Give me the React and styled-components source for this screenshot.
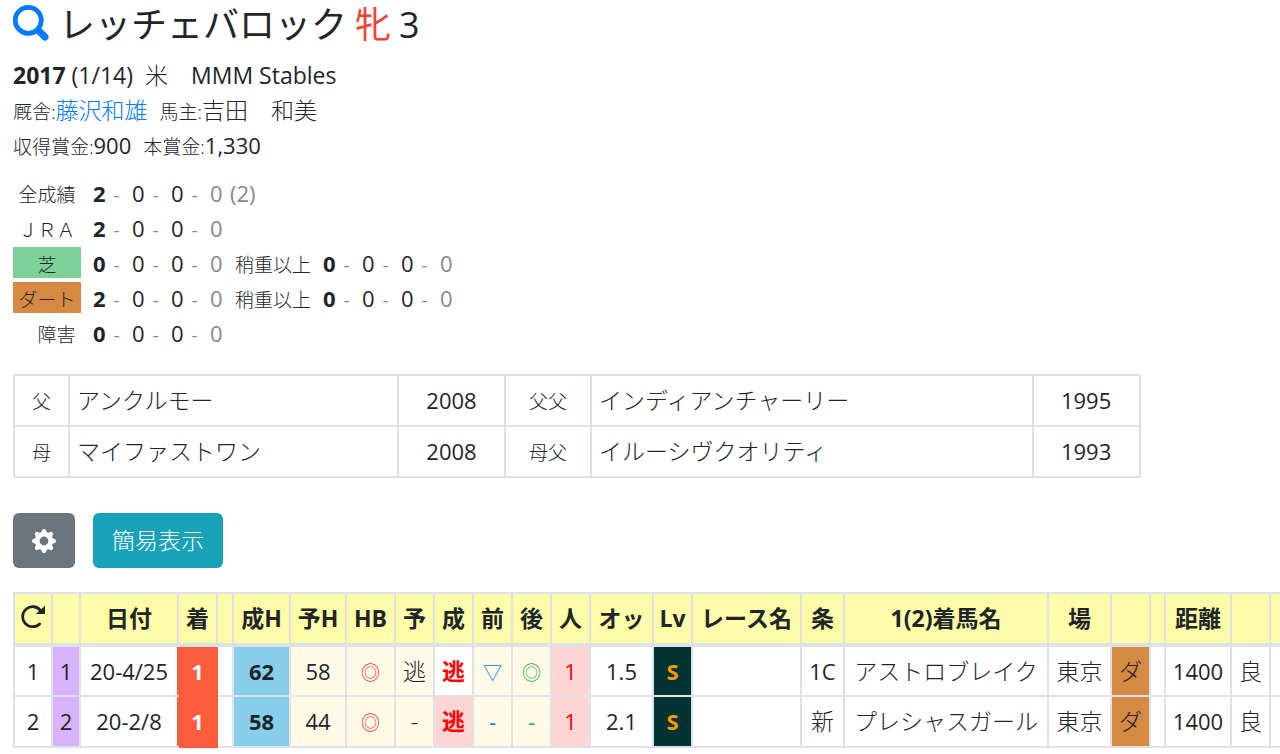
import React from 'react';
import styled, { createGlobalStyle } from 'styled-components';
import { BsGearFill } from 'react-icons/bs';

const GlobalStyle = createGlobalStyle`
  * {
    box-sizing: border-box;
  }
  body {
    margin: 0;
    overflow: hidden;
    background: #fff;
    color: #212529;
    font-family: "Open Sans", "Noto Sans CJK JP", sans-serif;
    font-size: 23px;
    font-weight: 300;
    line-height: 35px;
  }
`;

const Page = styled.main`
  padding-left: 13px;
`;

const Title = styled.h1`
  display: flex;
  align-items: center;
  gap: 8px;
  height: 50px;
  margin: 0 0 8px;
  font-size: 36px;
  font-weight: 400;
  line-height: 50px;
`;

const SearchLink = styled.a`
  display: flex;
  color: #007bff;
`;

const Sex = styled.span`
  color: #f44336;
`;

const Line = styled.div`
  display: flex;
  align-items: baseline;
  gap: 12px;
  height: 35px;
`;

const Small = styled.span`
  font-size: 19px;
`;

const Latin = styled.span`
  font-weight: 400;
`;

const Num = styled.span`
  font-size: 22px;
  font-weight: 400;
`;

const Link = styled.a`
  color: #007bff;
  text-decoration: none;
`;

const Records = styled.div`
  margin: 12px 0 24px;
`;

const Record = styled.div`
  display: flex;
  align-items: baseline;
  height: 35px;
  line-height: 37px;
`;

const RecordLabel = styled.span`
  width: 68px;
  height: 31px;
  margin-right: 12px;
  background: ${(p) => p.$bg || 'transparent'};
  font-size: 19px;
  text-align: center;
`;

const Score = styled.span`
  display: flex;
  align-items: baseline;
  font-size: 22px;
`;

const Place = styled.span`
  width: ${(p) => (p.$last ? 20 : 39)}px;
  color: ${(p) => (p.$last ? '#888' : 'inherit')};
  font-weight: ${(p) => (p.$first ? 700 : 400)};
`;

const Dash = styled.span`
  margin-left: 8px;
  color: #888;
  font-size: 19px;
  font-weight: 400;
`;

const Total = styled(Num)`
  color: #888;
`;

const Heavy = styled.span`
  margin: 0 12px 0 5px;
  font-size: 19px;
`;

const Table = styled.table`
  width: ${(p) => p.$width};
  border-collapse: collapse;
  table-layout: fixed;
`;

const Cell = styled.td`
  height: 51px;
  padding: 7px ${(p) => (p.$left ? 7 : 0)}px 2px;
  border: 2px solid #dee2e6;
  background: ${(p) => p.$bg || 'transparent'};
  color: ${(p) => p.$color || 'inherit'};
  font-weight: ${(p) => p.$weight || 300};
  text-align: ${(p) => (p.$left ? 'left' : 'center')};
  vertical-align: baseline;
  white-space: nowrap;
`;

const SmallCell = styled(Cell)`
  font-size: 19px;
`;

const NumCell = styled(Cell)`
  font-size: 22px;
  font-weight: ${(p) => p.$weight || 400};
`;

const MarkCell = styled(Cell)`
  font-size: ${(p) => (p.children === '-' ? 22 : 19)}px;
  font-weight: 400;
`;

// the finish colour runs over the borders, the left one belongs to the date cell
const DateCell = styled(NumCell)`
  border-right-color: #fa5c3c;
`;

const FinishCell = styled(NumCell)`
  border-color: #fa5c3c;
`;

const HeadCell = styled.th`
  height: 52px;
  padding: 0;
  border: 2px solid #dee2e6;
  border-bottom-width: 4px;
  background: #fcfca9;
  font-weight: 700;
  white-space: nowrap;

  svg {
    display: block;
    margin: 0 auto;
  }
`;

const Buttons = styled.div`
  display: flex;
  gap: 18px;
  margin: 35px 0 24px;
`;

const Button = styled.button`
  display: flex;
  align-items: center;
  height: 55px;
  padding: 0 19px;
  border: 0;
  border-radius: 6px;
  background: ${(p) => p.$bg};
  color: #fff;
  font: inherit;
`;

const Scroll = styled.div`
  overflow: hidden;
`;

const records = [
  { label: '全成績', wins: 2, total: '(2)' },
  { label: 'ＪＲＡ', wins: 2 },
  { label: '芝', wins: 0, bg: '#7dd098', heavy: true },
  { label: 'ダート', wins: 2, bg: '#d58943', heavy: true },
  { label: '　障害', wins: 0 },
];

const pedigree = [
  ['父', 'アンクルモー', '2008', '父父', 'インディアンチャーリー', '1995'],
  ['母', 'マイファストワン', '2008', '母父', 'イルーシヴクオリティ', '1993'],
];

const columns = [
  [38, 'refresh'], [28, ''], [98, '日付'], [39, '着'], [16, ''], [57, '成H'],
  [56, '予H'], [49, 'HB'], [39, '予'], [39, '成'], [39, '前'], [39, '後'],
  [39, '人'], [63, 'オッ'], [39, 'Lv'], [109, 'レース名'], [43, '条'],
  [204, '1(2)着馬名'], [63, '場'], [39, ''], [15, ''], [66, '距離'], [39, ''], [39, ''],
];

const cream = '#fffae5';
const pink = '#ffd6d3';

const races = [
  {
    no: 1, gate: 1, date: '20-4/25', time: 62, forecast: 58, plan: '逃', styleBg: '#fff',
    first: '▽', last: '◎', odds: '1.5', grade: '1C', rival: 'アストロブレイク',
  },
  {
    no: 2, gate: 2, date: '20-2/8', time: 58, forecast: 44, plan: '-', styleBg: pink,
    first: '-', last: '-', odds: '2.1', grade: '新', rival: 'プレシャスガール',
  },
];

function SearchIcon() {
  return (
    <svg width="38" height="42" viewBox="1 0 38 42" fill="none" stroke="currentColor" aria-hidden="true">
      <circle cx="16.3" cy="16.3" r="13" strokeWidth="4.8" />
      <path d="M27 27L33 33" strokeWidth="7" strokeLinecap="round" />
    </svg>
  );
}

function RefreshIcon() {
  return (
    <svg width="24" height="28" viewBox="0 0 24 28" fill="none" aria-label="更新">
      <path d="M19.6 5.6A10 10 0 1 0 18.6 18.9" stroke="currentColor" strokeWidth="2.8" strokeLinecap="round" />
      <path d="M24 .8V9H14.8z" fill="currentColor" />
    </svg>
  );
}

function Places(props) {
  return (
    <Score>
      <Place $first>{props.wins}<Dash>-</Dash></Place>
      <Place>0<Dash>-</Dash></Place>
      <Place>0<Dash>-</Dash></Place>
      <Place $last>0</Place>
    </Score>
  );
}

function Profile() {
  return (
    <>
      <Title>
        <SearchLink href="#search" aria-label="検索"><SearchIcon /></SearchLink>
        <span>レッチェバロック</span>
        <Sex>牝</Sex>
        <span>3</span>
      </Title>
      <Line>
        <Latin><b>2017</b> (1/14)</Latin>
        <span>米　<Latin>MMM Stables</Latin></span>
      </Line>
      <Line>
        <span><Small>厩舎:</Small><Link href="#trainer">藤沢和雄</Link></span>
        <span><Small>馬主:</Small>吉田　和美</span>
      </Line>
      <Line>
        <span><Small>収得賞金:</Small><Num>900</Num></span>
        <span><Small>本賞金:</Small><Num>1,330</Num></span>
      </Line>
    </>
  );
}

function Pedigree() {
  return (
    <Table $width="89%">
      <colgroup>
        <col width="55" /><col width="329" /><col width="107" />
        <col width="86" /><col /><col width="107" />
      </colgroup>
      <tbody>
        {pedigree.map((row) => (
          <tr key={row[0]}>
            <SmallCell>{row[0]}</SmallCell>
            <Cell $left>{row[1]}</Cell>
            <NumCell>{row[2]}</NumCell>
            <SmallCell>{row[3]}</SmallCell>
            <Cell $left>{row[4]}</Cell>
            <NumCell>{row[5]}</NumCell>
          </tr>
        ))}
      </tbody>
    </Table>
  );
}

function RaceRow({ race }) {
  return (
    <tr>
      <NumCell>{race.no}</NumCell>
      <NumCell $bg="#d9b3ff">{race.gate}</NumCell>
      <DateCell>{race.date}</DateCell>
      <FinishCell $bg="#fa5c3c" $color="#fff" $weight={700}>1</FinishCell>
      <Cell />
      <NumCell $bg="#87ceeb" $weight={700}>{race.time}</NumCell>
      <NumCell $bg={cream}>{race.forecast}</NumCell>
      <MarkCell $bg={cream} $color="#dc3545">◎</MarkCell>
      <Cell $bg={cream}>{race.plan}</Cell>
      <Cell $bg={race.styleBg} $color="#f00" $weight={700}>逃</Cell>
      <MarkCell $bg={cream} $color="#007bff">{race.first}</MarkCell>
      <MarkCell $bg={cream} $color="#28a745">{race.last}</MarkCell>
      <NumCell $bg={pink} $color="#f00">1</NumCell>
      <NumCell>{race.odds}</NumCell>
      <NumCell $bg="#003333" $color="#f90" $weight={700}>S</NumCell>
      <Cell />
      <Cell>{race.grade === '1C' ? <Num>1C</Num> : race.grade}</Cell>
      <Cell>{race.rival}</Cell>
      <Cell>東京</Cell>
      <Cell $bg="#d58943">ダ</Cell>
      <Cell />
      <NumCell>1400</NumCell>
      <Cell>良</Cell>
      <Cell />
    </tr>
  );
}

function Races() {
  return (
    <Scroll>
      <Table $width="1297px">
        <colgroup>
          {columns.map((c, i) => <col key={i} width={c[0]} />)}
        </colgroup>
        <thead>
          <tr>
            {columns.map((c, i) => (
              <HeadCell key={i}>{c[1] === 'refresh' ? <RefreshIcon /> : c[1]}</HeadCell>
            ))}
          </tr>
        </thead>
        <tbody>
          {races.map((race) => <RaceRow key={race.no} race={race} />)}
        </tbody>
      </Table>
    </Scroll>
  );
}

export default function App() {
  return (
    <Page>
      <GlobalStyle />
      <Profile />
      <Records>
        {records.map((r) => (
          <Record key={r.label}>
            <RecordLabel $bg={r.bg}>{r.label}</RecordLabel>
            <Places wins={r.wins} />
            {r.total && <Total>{r.total}</Total>}
            {r.heavy && <><Heavy>稍重以上</Heavy><Places wins={0} /></>}
          </Record>
        ))}
      </Records>
      <Pedigree />
      <Buttons>
        <Button $bg="#6c757d" aria-label="設定"><BsGearFill size={24} /></Button>
        <Button $bg="#17a2b8">簡易表示</Button>
      </Buttons>
      <Races />
    </Page>
  );
}
